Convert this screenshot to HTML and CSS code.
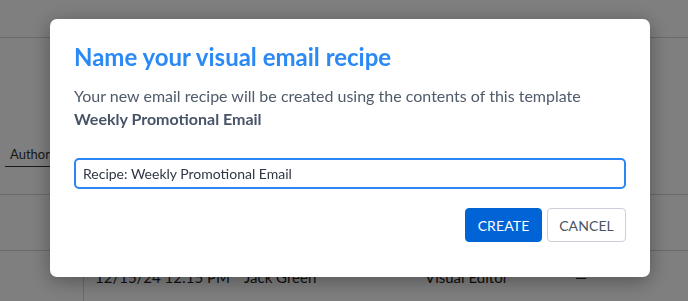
FILE: index.html
```html
<!DOCTYPE html>
<html lang="en">
<head>
<meta charset="utf-8">
<title>Name your visual email recipe</title>
<link rel="stylesheet" href="styles.css">
</head>
<body>
<div class="page">
  <header class="topbar"></header>
  <section class="filters">
    <div class="filter-field">Author</div>
  </section>
  <div class="row row-empty"></div>
  <div class="row row-data">
    <div class="cell cell-gutter"></div>
    <div class="cell cell-date">12/15/24 12:15 PM</div>
    <div class="cell cell-author">Jack Green</div>
    <div class="cell cell-type">Visual Editor</div>
    <div class="cell cell-dash">—</div>
  </div>
</div>

<div class="overlay">
  <div class="modal" role="dialog" aria-labelledby="modal-title">
    <h2 class="modal-title" id="modal-title">Name your visual email recipe</h2>
    <p class="modal-text">Your new email recipe will be created using the contents of this template<br><strong>Weekly Promotional Email</strong></p>
    <input class="modal-input" type="text" value="Recipe: Weekly Promotional Email">
    <div class="modal-actions">
      <button class="btn btn-primary">CREATE</button>
      <button class="btn btn-secondary">CANCEL</button>
    </div>
  </div>
</div>
</body>
</html>
```

FILE: styles.css
```css
* { box-sizing: border-box; }

html, body {
  margin: 0;
  padding: 0;
  width: 688px;
  height: 301px;
  overflow: hidden;
  font-family: "Lato", "Liberation Sans", sans-serif;
  background: #ffffff;
}

.page {
  width: 688px;
  height: 301px;
  background: #ffffff;
}

.topbar {
  height: 38px;
  border-bottom: 1px solid #d6d6d6;
}

.filters {
  height: 157px;
  padding: 108px 0 0 5px;
  border-bottom: 1px solid #d6d6d6;
}

.filter-field {
  width: 150px;
  font-size: 13px;
  color: #333;
  padding: 0 0 4px 5px;
  border-bottom: 1px solid #333;
}

.row-empty {
  height: 56px;
  border-bottom: 1px solid #d6d6d6;
}

.row-data {
  display: flex;
  height: 50px;
  font-size: 15px;
  color: #222;
}

.cell { padding-top: 17px; }
.cell-gutter { width: 84px; border-right: 1px solid #d6d6d6; }
.cell-date { width: 160px; padding-left: 11px; }
.cell-author { width: 181px; }
.cell-type { width: 150px; }
.cell-dash { width: 40px; }

.overlay {
  position: fixed;
  inset: 0;
  background: rgba(0, 0, 0, 0.5);
}

.modal {
  position: absolute;
  left: 50px;
  top: 19px;
  width: 600px;
  height: 258px;
  background: #ffffff;
  border-radius: 7px;
  box-shadow: 0 4px 20px rgba(0, 0, 0, 0.35);
  padding: 21px 24px 0 24px;
}

.modal-title {
  margin: 0;
  font-size: 24px;
  line-height: 34px;
  font-weight: 700;
  color: #2a89f5;
}

.modal-text {
  margin: 10px 0 0 0;
  font-size: 16px;
  line-height: 23px;
  color: #4f5b6b;
}

.modal-text strong {
  font-weight: 700;
  color: #475467;
}

.modal-input {
  display: block;
  width: 100%;
  height: 31px;
  margin-top: 28px;
  border: 2px solid #2b87f3;
  border-radius: 5px;
  padding: 0 7px;
  font-family: inherit;
  font-size: 14px;
  color: #2f3744;
  outline: none;
}

.modal-actions {
  display: flex;
  justify-content: flex-end;
  gap: 5px;
  margin-top: 19px;
}

.btn {
  height: 34px;
  font-family: inherit;
  font-size: 14px;
  border-radius: 4px;
  padding: 0;
  letter-spacing: 0.1px;
}

.btn-primary {
  width: 77px;
  background: #0064d7;
  color: #ffffff;
  border: 1px solid #0064d7;
}

.btn-secondary {
  width: 79px;
  background: #ffffff;
  color: #4a5464;
  border: 1px solid #cbd0d8;
}
```
